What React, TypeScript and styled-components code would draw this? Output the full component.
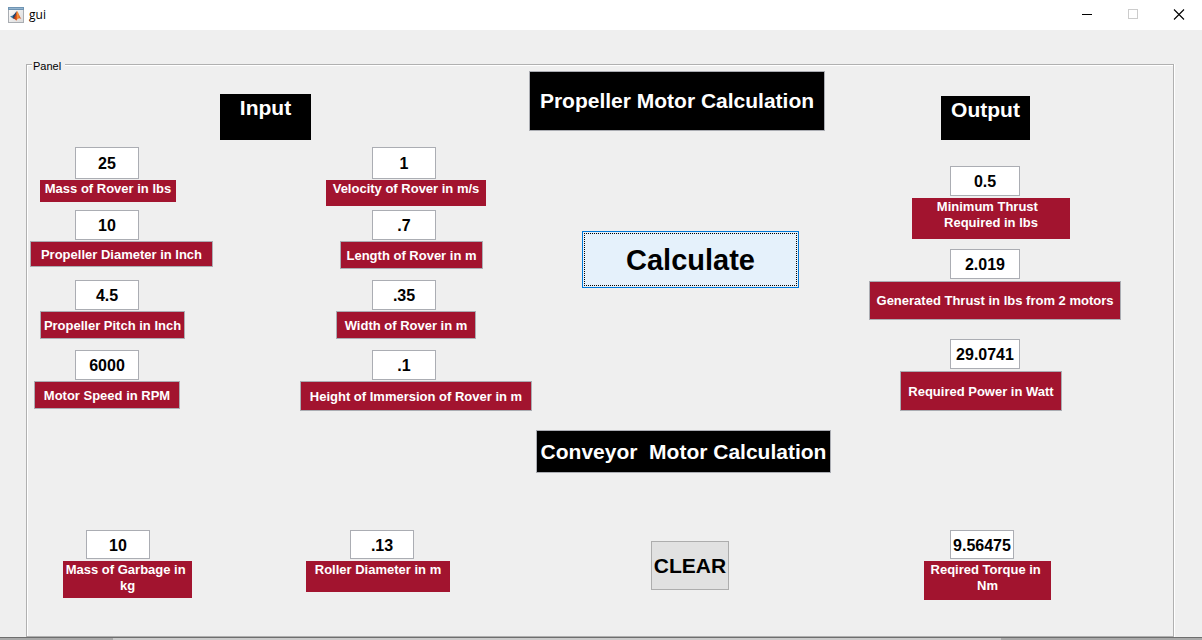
import React, { useId, useState } from "react";
import styled, { createGlobalStyle } from "styled-components";

const GlobalStyle = createGlobalStyle`
  * { box-sizing: border-box; }
  body {
    margin: 0;
    background: #efefef;
    color: #000;
    font-family: "Liberation Sans", Arial, sans-serif;
  }
  button, input { font-family: inherit; color: inherit; margin: 0; padding: 0; border-radius: 0; }
`;

const Window = styled.div`
  display: flex;
  flex-direction: column;
  min-height: 100vh;
`;

const TitleBar = styled.header`
  display: flex;
  align-items: center;
  height: 30px;
  padding-left: 8px;
  background: #fff;
`;

const Title = styled.h1`
  flex: 1;
  margin: 0 0 0 5px;
  font: 400 12px/16px "Open Sans", "Noto Sans", sans-serif;
`;

const WindowButton = styled.button`
  display: flex;
  align-items: center;
  justify-content: center;
  width: 46px;
  height: 30px;
  border: 0;
  background: transparent;
`;

const Body = styled.main`
  flex: 1;
  display: flex;
  flex-direction: column;
  padding: 28px 28px 0 26px;
`;

const Panel = styled.fieldset`
  flex: 1;
  min-width: 0;
  margin: 0;
  padding: 0 0 36px;
  border: 1px solid #b0b0b0;
  box-shadow: inset 1px 1px 0 #fff, 1px 0 0 #fff;
`;

const PanelTitle = styled.legend`
  margin-left: 5px;
  padding: 4px 4px 0 1px;
  background: #efefef;
  font-size: 11px;
  line-height: 9px;
`;

const Section = styled.section<{ $height: number }>`
  display: grid;
  grid-template-columns: minmax(0, 502fr) minmax(0, 338fr) minmax(0, 306fr);
  min-height: ${(p) => p.$height}px;
`;

const Area = styled.div<{ $top: number }>`
  display: flex;
  flex-direction: column;
  align-items: flex-start;
  padding-top: ${(p) => p.$top}px;
`;

const InputColumns = styled.div`
  display: grid;
  grid-template-columns: minmax(0, 270fr) minmax(0, 232fr);
  width: 100%;
`;

const FieldColumn = styled.div<{ $rows: string }>`
  display: grid;
  grid-template-rows: ${(p) => p.$rows};
`;

const GroupHeading = styled.h2<{ $indent: number; $width: number; $height: number; $after: number }>`
  width: ${(p) => p.$width}px;
  height: ${(p) => p.$height}px;
  margin: 0 0 ${(p) => p.$after}px ${(p) => p.$indent}px;
  background: #000;
  color: #fff;
  font-size: 21px;
  line-height: 28px;
  text-align: center;
`;

const Banner = styled.h2<{ $indent: number; $width: number; $height: number; $after: number }>`
  display: flex;
  align-items: center;
  justify-content: center;
  width: ${(p) => p.$width}px;
  height: ${(p) => p.$height}px;
  margin: 0 0 ${(p) => p.$after}px ${(p) => p.$indent}px;
  border: 1px solid #abadb3;
  background: #000;
  color: #fff;
  font-size: 21px;
  line-height: 28px;
  white-space: pre;
`;

const FieldBox = styled.div<{ $gap: number }>`
  display: flex;
  flex-direction: column;
  align-items: flex-start;
  gap: ${(p) => p.$gap}px;
`;

const Value = styled.input<{ $indent: number; $width: number; $height: number }>`
  width: ${(p) => p.$width}px;
  height: ${(p) => p.$height}px;
  margin-left: ${(p) => p.$indent}px;
  padding-top: 2px;
  border: 1px solid #abadb3;
  background: #fff;
  font-size: 16px;
  font-weight: 700;
  text-align: center;
`;

const Caption = styled.label<{ $indent: number; $width: number; $height: number; $framed: boolean }>`
  display: flex;
  align-items: ${(p) => (p.$framed ? "center" : "flex-start")};
  justify-content: center;
  width: ${(p) => p.$width}px;
  height: ${(p) => p.$height}px;
  margin-left: ${(p) => p.$indent}px;
  padding-top: 1px;
  border: ${(p) => (p.$framed ? "1px solid #abadb3" : "0")};
  background: #a2142f;
  color: #fff;
  font-size: 13px;
  font-weight: 700;
  line-height: 16px;
  text-align: center;
  white-space: pre;
`;

const CalculateButton = styled.button`
  width: 217px;
  height: 57px;
  margin-left: 53px;
  padding-top: 2px;
  border: 1px solid #0078d7;
  outline: 1px dotted #000;
  outline-offset: -3px;
  background: #e5f1fb;
  font-size: 29px;
  font-weight: 700;
`;

const ClearButton = styled.button`
  width: 78px;
  height: 49px;
  margin-left: 122px;
  border: 1px solid #adadad;
  background: #e1e1e1;
  font-size: 21px;
  font-weight: 700;
`;

const WindowEdge = styled.footer`
  height: 3px;
  border-top: 1px solid #6e6e6e;
  background: linear-gradient(90deg, #a9a9a9 113px, #cbcbcb 113px, #cbcbcb calc(100% - 201px), #a9a9a9 calc(100% - 201px));
`;

type FieldData = {
  caption: string;
  value: string;
  indent: number;
  width: number;
  height: number;
  framed?: boolean;
  valueHeight?: number;
};

const roverInputs: FieldData[] = [
  { caption: "Mass of Rover in lbs", value: "25", indent: 13, width: 136, height: 22, valueHeight: 32 },
  { caption: "Propeller Diameter in Inch", value: "10", indent: 3, width: 183, height: 26, framed: true },
  { caption: "Propeller Pitch in Inch", value: "4.5", indent: 13, width: 145, height: 28, framed: true },
  { caption: "Motor Speed in RPM", value: "6000", indent: 7, width: 146, height: 28, framed: true },
];

const hullInputs: FieldData[] = [
  { caption: "Velocity of Rover in m/s", value: "1", indent: 29, width: 160, height: 26, valueHeight: 32 },
  { caption: "Length of Rover in m", value: ".7", indent: 43, width: 143, height: 28, framed: true },
  { caption: "Width of Rover in m", value: ".35", indent: 39, width: 140, height: 28, framed: true },
  { caption: "Height of Immersion of Rover in m", value: ".1", indent: 3, width: 232, height: 30, framed: true },
];

const thrustOutputs: FieldData[] = [
  { caption: "Minimum Thrust  \nRequired in lbs", value: "0.5", indent: 45, width: 158, height: 41 },
  { caption: "Generated Thrust in lbs from 2 motors", value: "2.019", indent: 2, width: 252, height: 39, framed: true },
  { caption: "Required Power in Watt", value: "29.0741", indent: 33, width: 162, height: 40, framed: true },
];

const garbageInputs: FieldData[] = [
  { caption: "Mass of Garbage in \nkg", value: "10", indent: 36, width: 129, height: 37, valueHeight: 29 },
];
const rollerInputs: FieldData[] = [
  { caption: "Roller Diameter in m", value: ".13", indent: 9, width: 144, height: 31, valueHeight: 29 },
];
const torqueOutputs: FieldData[] = [
  { caption: "Reqired Torque in \nNm", value: "9.56475", indent: 57, width: 127, height: 39, valueHeight: 29 },
];

type FieldsProps = {
  fields: FieldData[];
  valueIndent: number;
  valueWidth?: number;
  rows?: string;
  gap?: number;
};

function Field({ data, valueIndent, valueWidth, gap }: { data: FieldData; valueIndent: number; valueWidth: number; gap: number }) {
  const id = useId();
  const [value, setValue] = useState(data.value);
  return (
    <FieldBox $gap={gap}>
      <Value
        id={id}
        value={value}
        onChange={(e) => setValue(e.target.value)}
        $indent={valueIndent}
        $width={valueWidth}
        $height={data.valueHeight ?? 30}
      />
      <Caption htmlFor={id} $indent={data.indent} $width={data.width} $height={data.height} $framed={!!data.framed}>
        {data.caption}
      </Caption>
    </FieldBox>
  );
}

function Fields({ fields, valueIndent, valueWidth = 64, rows = "auto", gap = 1 }: FieldsProps) {
  return (
    <FieldColumn $rows={rows}>
      {fields.map((f) => (
        <Field key={f.caption} data={f} valueIndent={valueIndent} valueWidth={valueWidth} gap={gap} />
      ))}
    </FieldColumn>
  );
}

function MatlabIcon() {
  return (
    <svg width="16" height="16" viewBox="0 0 16 16" aria-hidden="true">
      <defs>
        <linearGradient id="face" x1="0" y1="0" x2="1" y2="1">
          <stop offset="0" stopColor="#ffffff" />
          <stop offset="1" stopColor="#d9d9d9" />
        </linearGradient>
        <linearGradient id="peak" x1="0" y1="0" x2="1" y2="0">
          <stop offset="0" stopColor="#7a1c12" />
          <stop offset="0.4" stopColor="#e0561a" />
          <stop offset="0.55" stopColor="#f59a3c" />
          <stop offset="1" stopColor="#c8320f" />
        </linearGradient>
      </defs>
      <rect x="0.5" y="0.5" width="15" height="15" fill="url(#face)" stroke="#a9adb2" />
      <rect x="0" y="0" width="16" height="3" fill="#6f94b3" />
      <rect x="1" y="1" width="14" height="1" fill="#94b5cf" />
      <path d="M2 9.6 L5.2 8.2 L7 6.4 L8.4 4.4 L7.6 9.2 L5.2 11.8 L4 10.8 Z" fill="#3c7fb1" />
      <path d="M5.2 8.2 L7 6.4 L8.8 4 L8 9 L5.6 11.6 L4.6 10.6 Z" fill="#27466b" />
      <path d="M5.2 11.8 L7.4 8.6 L9 4 C10.4 5 11.4 9.4 13.4 12 C11.6 10.8 10.6 10.8 8.2 13.8 C7.4 12.4 6.4 11.8 5.2 11.8 Z" fill="url(#peak)" />
    </svg>
  );
}

export default function App() {
  return (
    <Window>
      <GlobalStyle />
      <TitleBar>
        <MatlabIcon />
        <Title>gui</Title>
        <WindowButton aria-label="Minimize">
          <svg width="12" height="12" viewBox="0 0 12 12" shapeRendering="crispEdges">
            <path d="M1 5.5H11" stroke="#000" />
          </svg>
        </WindowButton>
        <WindowButton aria-label="Maximize" disabled>
          <svg width="12" height="12" viewBox="0 0 12 12" shapeRendering="crispEdges">
            <rect x="1.5" y="0.5" width="9" height="9" fill="none" stroke="#ccc" />
          </svg>
        </WindowButton>
        <WindowButton aria-label="Close">
          <svg width="12" height="12" viewBox="0 0 12 12">
            <path d="M1 0.5L11 10.5M11 0.5L1 10.5" stroke="#000" strokeWidth="1.1" />
          </svg>
        </WindowButton>
      </TitleBar>
      <Body>
        <Panel>
          <PanelTitle>Panel</PanelTitle>
          <Section $height={359}>
            <Area $top={23}>
              <GroupHeading $indent={193} $width={91} $height={46} $after={7}>Input</GroupHeading>
              <InputColumns>
                <Fields fields={roverInputs} valueIndent={48} rows="63px 70px 70px auto" />
                <Fields fields={hullInputs} valueIndent={75} rows="63px 70px 70px auto" />
              </InputColumns>
            </Area>
            <Area $top={0}>
              <Banner $indent={0} $width={296} $height={60} $after={100}>Propeller Motor Calculation</Banner>
              <CalculateButton type="button">Calculate</CalculateButton>
            </Area>
            <Area $top={25}>
              <GroupHeading $indent={74} $width={89} $height={44} $after={26}>Output</GroupHeading>
              <Fields fields={thrustOutputs} valueIndent={83} valueWidth={70} rows="83px 90px auto" gap={2} />
            </Area>
          </Section>
          <Section $height={169}>
            <Area $top={100}>
              <InputColumns>
                <Fields fields={garbageInputs} valueIndent={59} gap={2} />
                <Fields fields={rollerInputs} valueIndent={53} gap={2} />
              </InputColumns>
            </Area>
            <Area $top={0}>
              <Banner $indent={7} $width={295} $height={43} $after={68}>{"Conveyor  Motor Calculation"}</Banner>
              <ClearButton type="button">CLEAR</ClearButton>
            </Area>
            <Area $top={100}>
              <Fields fields={torqueOutputs} valueIndent={83} gap={2} />
            </Area>
          </Section>
        </Panel>
      </Body>
      <WindowEdge />
    </Window>
  );
}
